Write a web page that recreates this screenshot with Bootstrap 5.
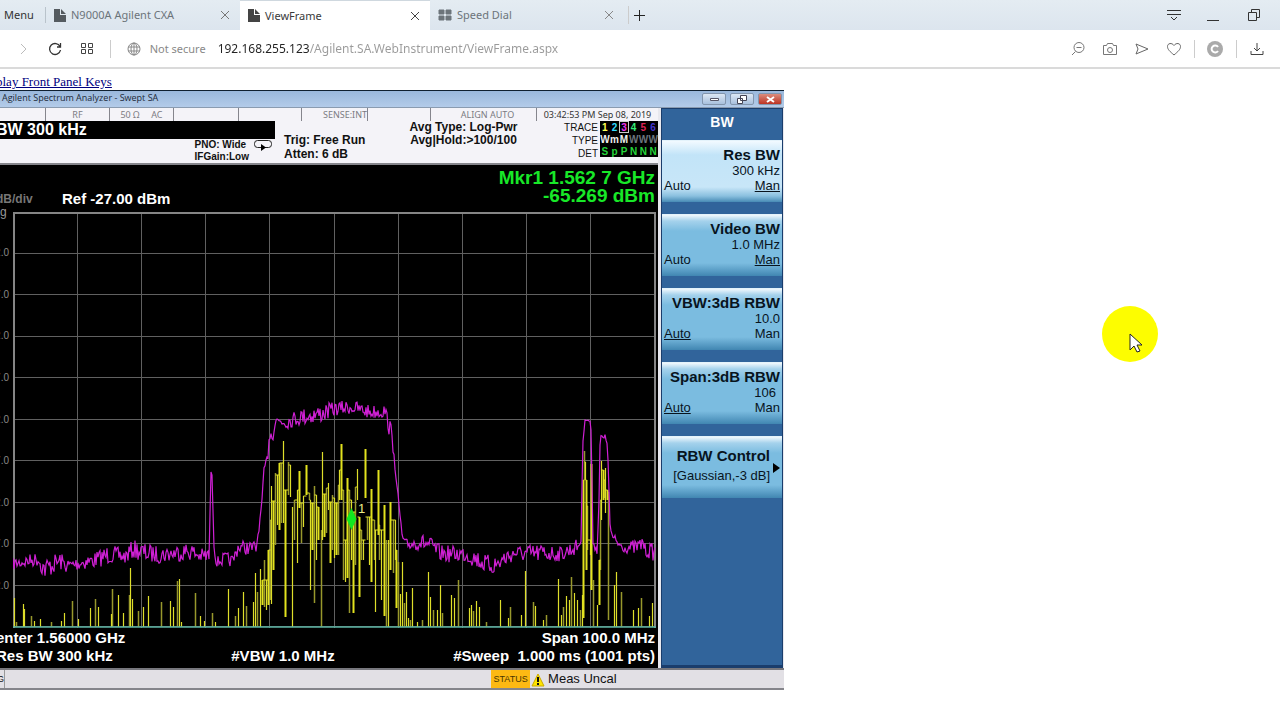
<!DOCTYPE html>
<html lang="en">
<head>
<meta charset="utf-8">
<meta name="viewport" content="width=device-width, initial-scale=1">
<title>ViewFrame</title>
<link href="https://cdn.jsdelivr.net/npm/bootstrap@5.3.0/dist/css/bootstrap.min.css" rel="stylesheet">
<style>
body{font-family:"Noto Sans","Open Sans",sans-serif;font-size:11px;line-height:16px;color:#333;background:#fff;min-height:100vh;overflow-x:hidden}
button,input{font:inherit;color:inherit;border:0;background:none;padding:0}
svg{display:block;flex:none}
.tabstrip{height:30px;background:linear-gradient(#e4ecf2,#dce5ee);padding-right:16px}
.menu-btn{width:46px;border-right:1px solid #b9c3cb;height:16px;line-height:16px;padding-left:4px;text-align:left}
.tab-item{height:30px;padding:0 8px;color:#6c747a;gap:5px}
.tab-item button{width:12px}
.tab-item.current{background:#fff;color:#3a3a3a;border-top:1px solid #cfd8df}
.w-tab{width:190px}
.w-tab-last{width:194px}
.addressbar{height:39px;border-bottom:2px solid #dadada;padding:0 16px}
.nav-tools{gap:18px}
.vline{width:1px;height:18px;background:#ccc}
.rule-gap{margin:0 13px}
.secure-note{color:#888;margin-right:12px}
.url-input{width:100%;min-width:0;font-size:12px;height:24px;background:linear-gradient(90deg,#222 92px,#9a9a9a 92px);-webkit-background-clip:text;background-clip:text;color:transparent;outline-offset:2px}
.front-link{font:13px/16px "Liberation Serif",serif;color:#000080;margin:5px 0 0 -4px;text-decoration:underline}
.analyzer{width:61.25%;min-width:640px;font-family:"Liberation Sans",sans-serif;color:#111}
.winbar{height:18px;border-top:1px solid #102030;background:linear-gradient(#9ab8dc,#b3cbe9);font:9px/14px "Open Sans",sans-serif;color:#1c2938;padding:0 2px;border-bottom:1px solid #8a9bb0}
.winbtn{width:24px;height:12px;border:1px solid #8295ad;border-radius:2px;background:linear-gradient(#dce7f4,#a8c0dd);display:flex;align-items:center;justify-content:center}
.winbtn.shut{background:linear-gradient(#dc8d7d,#bd3323)}
.instrument{display:grid;grid-template-columns:minmax(0,1fr) 122px;column-gap:3px;background:#e8e8ee;padding-right:1px}
.strip{display:grid;grid-template-columns:46fr 64fr 64fr 65fr 63fr 66fr 63fr 106fr 121fr;height:13px;background:#f4f3f8;font:9px/13px "Noto Sans",sans-serif;color:#7b7b82}
.strip>div{border-right:1px solid #85858d;text-align:center;white-space:nowrap}
.strip>div:last-child{color:#333;border:0}
.info{display:grid;grid-template-columns:275fr 105fr 167fr 111fr;height:44px;background:#f4f3f8;font-size:12px;line-height:13px;font-weight:700;border-bottom:2px solid #85858b}
.info>div{white-space:nowrap;min-width:0}
.active-fn{background:#000;color:#fff;font-size:16px;line-height:18px;height:18px}
.trig{padding:12px 0 0 9px;line-height:14px;font-size:12px}
.pull-left{margin-left:-4px}
.pno{font-size:10px;line-height:12px;padding:0 3px 0 0;gap:5px}
.trace-names{font-size:10px;line-height:13px;font-weight:400;text-align:right;padding-right:2px}
.trace-set{width:58px;height:36px;background:#000;border-collapse:collapse;font-size:10px;line-height:11px;color:#25d43a}
.trace-set td{padding:0;text-align:center;width:16%}
.trace-set td.picked{outline:1px solid #ccc;outline-offset:-1px}
.readout{background:#000;color:#fff;height:47px;padding:4px 3px 0 0;line-height:18px;font-weight:700}
.marker-read{color:#18e828;font-size:19px;text-align:right}
.ref{font-size:15px}
.dbdiv{width:62px;font-size:12px;color:#777}
.logtag{font-size:12px;line-height:8px;color:#999;font-weight:400;margin-bottom:-4px}
.plot{background:#000;height:416px}
.scale{width:13px;color:#888;font-size:10px;line-height:12px;padding:35px 4px 36px 0;direction:rtl;overflow:hidden}
.footing{background:#000;color:#fff;font-size:15px;line-height:18px;font-weight:700;padding:1px 3px 3px 0}
.footing div{white-space:nowrap}
.softkeys{background:#31649b;border:1px solid #1a3d6c;border-width:1px 1px 3px}
.softkeys h2{font-size:14px;line-height:16px;font-weight:700;color:#fff;text-align:center;margin:0;padding:5px 0 10px}
.keylist{gap:12px}
.softkey{height:62px;background:linear-gradient(#f0f8fd 0,#a5d2ec 6px,#7bbce0 16px,#7bbce0 48px,#3c82ae 62px);color:#08141e;font-size:13px;line-height:16px;padding:0 2px 3px;text-align:right;border-top:1px solid #e4f3fb}
.softkey.on{background:linear-gradient(#f2faff 0,#c2e4f8 14px,#c8e6f8 46px,#8ac0df 55px,#3c82ae 62px)}
.softkey strong{font-size:15px;display:block;white-space:nowrap}
.softkey .val{display:block;line-height:15px}
.submenu{padding:0 12px 0 0}
.submenu .val{line-height:24px;white-space:nowrap}
.submenu .arrow{position:absolute;right:2px;top:26px}
.statusbar{height:22px;background:#e2e0e5;border-top:2px solid #77777d;border-bottom:2px solid #85858b;font-size:13px;line-height:18px}
.msg-tag{width:5px;border-right:1px solid #999;font-size:9px;direction:rtl;overflow:hidden}
.status-group{margin-left:62%}
.status-tag{width:39px;background:#fdb913;font-size:9px;text-align:center;color:#4a3500}
.pointer-spot{position:absolute;left:86%;top:305px}
</style>
</head>
<body class="d-flex flex-column position-relative">
<header>
  <div class="tabstrip d-flex align-items-center">
    <button class="menu-btn">Menu</button>
    <div class="tab-item w-tab-last d-flex align-items-center">
      <svg width="12" height="13" viewBox="0 0 12 13"><path d="M0 0h6v6h6v7H0zM7 0l5 5H7z" fill="#555b60"/></svg>
      <span class="flex-grow-1">N9000A Agilent CXA</span>
      <button aria-label="Close N9000A"><svg width="10" height="10"><path d="M1 1l8 8M9 1L1 9" stroke="#777" fill="none"/></svg></button>
    </div>
    <div class="tab-item current w-tab d-flex align-items-center">
      <svg width="12" height="13" viewBox="0 0 12 13"><path d="M0 0h6v6h6v7H0zM7 0l5 5H7z" fill="#444"/></svg>
      <span class="flex-grow-1">ViewFrame</span>
      <button aria-label="Close ViewFrame"><svg width="10" height="10"><path d="M1 1l8 8M9 1L1 9" stroke="#444" fill="none"/></svg></button>
    </div>
    <div class="tab-item w-tab-last d-flex align-items-center">
      <svg width="14" height="12"><path d="M1 1h5v4H1zM8 1h5v4H8zM1 7h5v4H1zM8 7h5v4H8z" fill="#6c747a" stroke="#6c747a" stroke-linejoin="round"/></svg>
      <span class="flex-grow-1">Speed Dial</span>
      <button aria-label="Close Speed Dial"><svg width="10" height="10"><path d="M1 1l8 8M9 1L1 9" stroke="#888" fill="none"/></svg></button>
    </div>
    <div class="vline ms-1"></div>
    <button class="ms-1" aria-label="New tab"><svg width="13" height="13"><path d="M1 6.500h11M6.500 1v11" stroke="#222"/></svg></button>
    <div class="ms-auto d-flex align-items-center gap-4">
      <button aria-label="Tab menu"><svg width="16" height="14"><path d="M1 2.500h14M1 6.500h14M5 9l3 3 3-3" fill="none" stroke="#333"/></svg></button>
      <button aria-label="Minimize"><svg width="14" height="14"><path d="M1 12.500h12" stroke="#333"/></svg></button>
      <button aria-label="Restore"><svg width="20" height="14"><path d="M4.500 4.500h8v8h-8zM7.500 4V1.500h8v8H13" fill="none" stroke="#333"/></svg></button>
    </div>
  </div>
  <div class="addressbar d-flex align-items-center">
    <div class="nav-tools d-flex align-items-center me-3">
      <button aria-label="Forward"><svg width="14" height="14"><path d="M5 2l5 5-5 5" fill="none" stroke="#bbb"/></svg></button>
      <button aria-label="Reload"><svg width="14" height="14"><path d="M12 4.500A5.500 5.500 0 1 0 12.500 8M12.500 1v4H9" fill="none" stroke="#333" stroke-width="1.300"/></svg></button>
      <button aria-label="Speed dial"><svg width="14" height="14"><path d="M1.500 1.500h4v4h-4zM8.500 1.500h4v4h-4zM1.500 7.500h4v4h-4zM8.500 7.500h4v4h-4z" fill="none" stroke="#444"/></svg></button>
    </div>
    <div class="vline me-3"></div>
    <svg class="me-1" width="15" height="14"><g fill="none" stroke="#888"><circle cx="7" cy="7" r="6"/><ellipse cx="7" cy="7" rx="3" ry="6"/><path d="M7 1v12M1 5h12M1 9h12"/></g></svg>
    <label for="url" class="text-nowrap secure-note ms-1">Not secure</label>
    <input id="url" class="url-input" value="192.168.255.123/Agilent.SA.WebInstrument/ViewFrame.aspx">
    <div class="d-flex align-items-center nav-tools">
      <button aria-label="Zoom out"><svg width="14" height="14"><path d="M4.500 9.500L1 13M5.500 5.500h5" stroke="#777"/><circle cx="8" cy="5.500" r="5" fill="none" stroke="#777"/></svg></button>
      <button aria-label="Snapshot"><svg width="14" height="14"><path d="M.5 3.500h3l1-2h5l1 2h3v9H.5z" fill="none" stroke="#777"/><circle cx="7" cy="8" r="2.500" fill="none" stroke="#777"/></svg></button>
      <button aria-label="Send"><svg width="14" height="14"><path d="M1 2l12 5-12 5 2-5z" fill="none" stroke="#666"/></svg></button>
      <button aria-label="Favourite"><svg width="14" height="14"><path d="M7 13C3 9.500.5 7.500.5 4.500.5 1 5 .5 7 3.500 9 .5 13.500 1 13.500 4.500 13.500 7.500 11 9.500 7 13z" fill="none" stroke="#666"/></svg></button>
    </div>
    <div class="vline rule-gap"></div>
    <button aria-label="Extension"><svg width="16" height="16"><circle cx="8" cy="8" r="8" fill="#aaa"/><path d="M11 6a3.500 3.500 0 1 0 0 4" fill="none" stroke="#fff" stroke-width="2"/></svg></button>
    <div class="vline rule-gap"></div>
    <button aria-label="Downloads"><svg width="14" height="14"><path d="M7 1v8M4 6l3 3 3-3M1 9v3.500h12V9" fill="none" stroke="#444"/></svg></button>
  </div>
</header>

<main class="d-flex flex-column align-items-start">
  <a class="front-link" href="#">play Front Panel Keys</a>
  <section class="analyzer">
    <div class="winbar d-flex align-items-start">
      <span class="flex-grow-1">Agilent Spectrum Analyzer - Swept SA</span>
      <div class="d-flex gap-1 pt-1 pb-1 align-self-center">
        <button class="winbtn" aria-label="Minimize analyzer"><svg width="9" height="5"><path d="M.5 1.500h8v2h-8z" fill="#fff" stroke="#556"/></svg></button>
        <button class="winbtn" aria-label="Restore analyzer"><svg width="10" height="9"><path d="M3.500.5h6v5h-6zM.5 3.500h5v5h-5z" fill="#fff" stroke="#445"/></svg></button>
        <button class="winbtn shut" aria-label="Close analyzer"><svg width="9" height="7"><path d="M1 1l7 5M8 1L1 6" stroke="#fff" stroke-width="2"/></svg></button>
      </div>
    </div>
    <div class="instrument">
      <div>
        <div class="strip">
          <div></div><div>RF</div><div>50 Ω &nbsp;&nbsp;&nbsp; AC</div><div></div><div></div><div class="text-end">SENSE:INT</div><div></div><div class="ps-2">ALIGN AUTO</div><div>03:42:53 PM Sep 08, 2019</div>
        </div>
        <div class="info">
          <div>
            <div class="active-fn"><div class="pull-left">BW 300 kHz</div></div>
            <div class="pno d-flex justify-content-end align-items-start">
              <div>PNO: Wide<br>IFGain:Low</div>
              <svg width="18" height="12"><rect x=".5" y="1.500" width="17" height="7" rx="3" fill="none" stroke="#222"/><path d="M7 5l5 3.500L7 12z"/></svg>
            </div>
          </div>
          <div class="trig"><div>Trig: Free Run</div><div>Atten: 6 dB</div></div>
          <div class="text-center">Avg Type: Log-Pwr<br>Avg|Hold:&gt;100/100</div>
          <div class="d-flex justify-content-end">
            <div class="trace-names">TRACE<br>TYPE<br>DET</div>
            <table class="trace-set">
              <tr><td style="color:#ff5">1</td><td style="color:#3df">2</td><td class="picked" style="color:#e3e">3</td><td style="color:#3e7">4</td><td style="color:#d25">5</td><td style="color:#43c">6</td></tr>
              <tr style="color:#eee"><td>W</td><td>m</td><td>M</td><td class="text-secondary">W</td><td class="text-secondary">W</td><td class="text-secondary">W</td></tr>
              <tr><td>S</td><td>p</td><td>P</td><td>N</td><td>N</td><td>N</td></tr>
            </table>
          </div>
        </div>
        <div class="readout d-flex">
          <div class="d-flex flex-column justify-content-end flex-grow-1">
            <div class="d-flex"><div class="dbdiv"><div class="pull-left">dB/div</div></div><div class="ref">Ref -27.00 dBm</div></div>
            <div class="logtag">g</div>
          </div>
          <div class="marker-read">Mkr1 1.562 7 GHz<br>-65.269 dBm</div>
        </div>
        <div class="plot d-flex">
          <div class="scale d-flex flex-column justify-content-between"><span>2.0</span><span>7.0</span><span>2.0</span><span>7.0</span><span>2.0</span><span>7.0</span><span>2.0</span><span>7.0</span><span>2.0</span></div>
          <svg id="scope" class="flex-grow-1 flex-shrink-1" width="100" height="416" viewBox="13 212 645 416" preserveAspectRatio="none" role="img" aria-label="Spectrum traces"></svg>
        </div>
        <div class="footing">
          <div class="d-flex justify-content-between"><div class="pull-left">enter 1.56000 GHz</div><div>Span 100.0 MHz</div></div>
          <div class="d-flex justify-content-between"><div class="pull-left">Res BW 300 kHz</div><div>#VBW 1.0 MHz</div><div>#Sweep &nbsp;1.000 ms (1001 pts)</div></div>
        </div>
      </div>
      <aside class="softkeys">
        <h2>BW</h2>
        <div class="keylist d-flex flex-column">
          <button class="softkey on"><strong>Res BW</strong><span class="val">300 kHz</span><span class="d-flex justify-content-between"><span>Auto</span><u>Man</u></span></button>
          <button class="softkey"><strong>Video BW</strong><span class="val">1.0 MHz</span><span class="d-flex justify-content-between"><span>Auto</span><u>Man</u></span></button>
          <button class="softkey"><strong>VBW:3dB RBW</strong><span class="val">10.0</span><span class="d-flex justify-content-between"><u>Auto</u><span>Man</span></span></button>
          <button class="softkey"><strong>Span:3dB RBW</strong><span class="val pe-1">106</span><span class="d-flex justify-content-between"><u>Auto</u><span>Man</span></span></button>
          <button class="softkey submenu position-relative"><strong>RBW Control</strong><span class="val">[Gaussian,-3 dB]</span><svg class="arrow" width="7" height="10"><path d="M0 0l7 5-7 5z"/></svg></button>
        </div>
      </aside>
    </div>
    <div class="statusbar d-flex">
      <div class="msg-tag">G</div>
      <div class="d-flex status-group">
        <div class="status-tag">STATUS</div>
        <svg width="18" height="18" viewBox="-1 0 18 18"><path d="M7 4l6 12H1z" fill="#ffe500" stroke="#c9a800" stroke-linejoin="round"/><path d="M7 7v5M7 13v2" stroke="#111" stroke-width="2"/></svg>
        <div>Meas Uncal</div>
      </div>
    </div>
  </section>
</main>

<svg class="pointer-spot" width="58" height="58" aria-hidden="true"><circle cx="29" cy="29" r="28" fill="#fdfd00"/><path d="M29 29v16l4-4 3 6 3-1-3-6h5z" fill="#fff" stroke="#222"/></svg>

<script src="https://cdn.jsdelivr.net/npm/bootstrap@5.3.0/dist/js/bootstrap.bundle.min.js"></script>
<script>
// Max-hold trace: x, level, noise amplitude
const hold=[[13,564,5],[38,559,6],[44,569,9],[60,561,8],[67,566,6],[80,563,6],[95,560,7],[110,554,8],[125,557,6],[133,549,8],[145,553,8],[160,555,7],[175,553,7],[190,551,8],[200,556,6],[209,556,8],[211,472,0],[212,475,0],[214,545,2],[216,562,4],[225,559,6],[233,561,5],[238,547,6],[250,548,6],[256,549,7],[260,520,2],[262,500,2],[264,470,2],[268,455,3],[269,437,4],[273,432,7],[276,420,3],[285,422,6],[300,417,7],[320,414,8],[335,409,6],[350,407,6],[370,412,6],[385,411,6],[388,422,6],[391,435,10],[394,450,5],[396,480,3],[399,505,3],[402,535,2],[405,545,5],[420,542,7],[430,545,7],[440,553,7],[450,554,7],[465,554,7],[475,558,8],[485,564,8],[496,565,9],[505,558,8],[515,553,6],[530,554,8],[545,553,8],[560,554,6],[570,550,7],[578,546,6],[581,540,4],[583,440,2],[585,420,0],[590,421,1],[591,430,0],[593,540,4],[597,552,3],[599,500,2],[600,445,0],[601,437,2],[607,440,5],[608,460,0],[610,525,2],[613,540,6],[625,548,4],[640,547,8],[643,540,6],[645,550,6],[655,552,8]];
// Live trace: x, top, bottom (baseline when omitted)
const live=[[14,598],[16,622],[23,604],[24,609],[31,616],[34,621],[40,619],[51,622],[61,621],[64,613],[72,601],[78,619],[90,608],[95,599],[98,607],[111,614],[112,589],[118,595],[123,613],[129,595],[130,568],[132,599],[138,611],[143,607],[148,596],[161,602],[170,601],[173,607],[177,581],[179,579],[181,622],[195,593],[200,616],[204,621],[212,613],[215,622],[228,589],[235,616],[238,608],[243,592],[246,606],[253,602],[255,573],[257,592],[260,569],[262,580,605],[264,560,607],[266,580,610],[268,550,605],[270,520,600],[271,486,604],[273,501,570],[275,473,545],[277,475,525],[279,463,530],[281,463,523],[283,441,523],[285,490,617],[288,462,495],[290,465,497],[292,507],[294,500,540],[297,490,563],[299,471,508],[301,503,543],[303,496,527],[306,465,495],[309,493,500],[310,500,590],[312,503,550],[314,486,603],[316,495,560],[318,507,540],[321,530],[322,452,540],[324,494,537],[326,488,533],[328,483,510],[330,502,563],[332,495,550],[334,498,558],[336,503,555],[338,485,555],[339,470,500],[341,444,500],[343,490,580],[345,540,582],[347,478,578],[349,490,613],[351,500,560],[353,512,613],[355,487,565],[357,469,500],[359,517,597],[361,530,560],[363,540,560],[365,449,498],[367,517,540],[369,517,565],[371,489,582],[374,520,560],[375,530,612],[378,470,535],[379,525,560],[381,530,600],[384,505,616],[386,540],[388,540],[390,502,570],[393,520,573],[395,520,560],[396,550,608],[398,562],[400,594],[402,562],[404,603],[406,592],[408,618],[410,620],[412,588],[417,622],[422,620],[428,572],[430,597],[433,610],[437,610],[440,585],[442,613],[451,595],[454,598],[458,580],[469,608],[471,605],[473,611],[476,601],[479,607],[486,622],[500,600],[508,618],[510,607],[521,615],[525,571],[533,602],[535,606],[543,620],[546,615],[558,579],[561,615],[563,607],[566,596],[569,600],[571,577],[574,593],[577,600],[580,610],[582,595],[583,480,618],[584,451,480],[585,462,480],[586,480,570],[587,506,550],[590,540,555],[591,464,590],[593,580],[597,605],[599,560,605],[600,500,570],[601,461,520],[603,470,500],[604,480,498],[605,468,513],[607,490,500],[608,492,620],[614,585],[616,572],[621,592],[633,610],[638,608],[641,598],[649,616],[652,603]];
let seed=7;
const rnd=()=>(seed=(seed*16807)%2147483647)/2147483647;
let grid="";
for(let i=0;i<=10;i++){const x=Math.round(13+i*64.1)+.5,y=Math.round(211+i*41.5)+.5;grid+=`M${x} 212V628M13 ${y}H656`;}
let pts="",k=0;
for(let x=13;x<=655;x+=1){
  while(k<hold.length-2&&hold[k+1][0]<=x)k++;
  const a=hold[k],b=hold[k+1],t=(x-a[0])/(b[0]-a[0]);
  const amp=(a[2]+(b[2]-a[2])*t)*1.2;
  pts+=`${x},${(a[1]+(b[1]-a[1])*t+(rnd()*2-1)*amp).toFixed(1)} `;
}
let bright="",dim="",thick="";
live.forEach(([x,t,b],i)=>{
  const line=`M${x+.5} ${t}V${b||627}`;
  if(i%3===1)dim+=line;else if(b&&i%3===0)thick+=line;else bright+=line;
  const n=live[i+1];
  if(b&&n&&n[2]){const y=Math.max(t,n[1]);bright+=`M${x+.5} ${y}H${n[0]+.5}`;}
});
document.getElementById("scope").innerHTML=
 `<path d="${grid}" stroke="#606060" fill="none"/><path d="M14 628V213H655V628" stroke="#858585" stroke-width="2" fill="none"/>
  <path d="${dim}" stroke="#98982c" stroke-width="1.500"/><path d="${bright}" stroke="#dede2a" stroke-width="1.200" fill="none"/><path d="${thick}" stroke="#e2e21e" stroke-width="2"/>
  <polyline points="${pts}" fill="none" stroke="#cf20d4" stroke-width="1.200"/>
  <path d="M13 627H656" stroke="#5bb5a5" stroke-width="1.500"/>
  <rect x="357" y="500" width="10" height="16" fill="#000"/><text x="358" y="513" font-size="13" fill="#eeee88">1</text>
  <path d="M351.500 508l5 11-5 11-5-11z" fill="#10e820"/>`;
</script>
</body>
</html>
